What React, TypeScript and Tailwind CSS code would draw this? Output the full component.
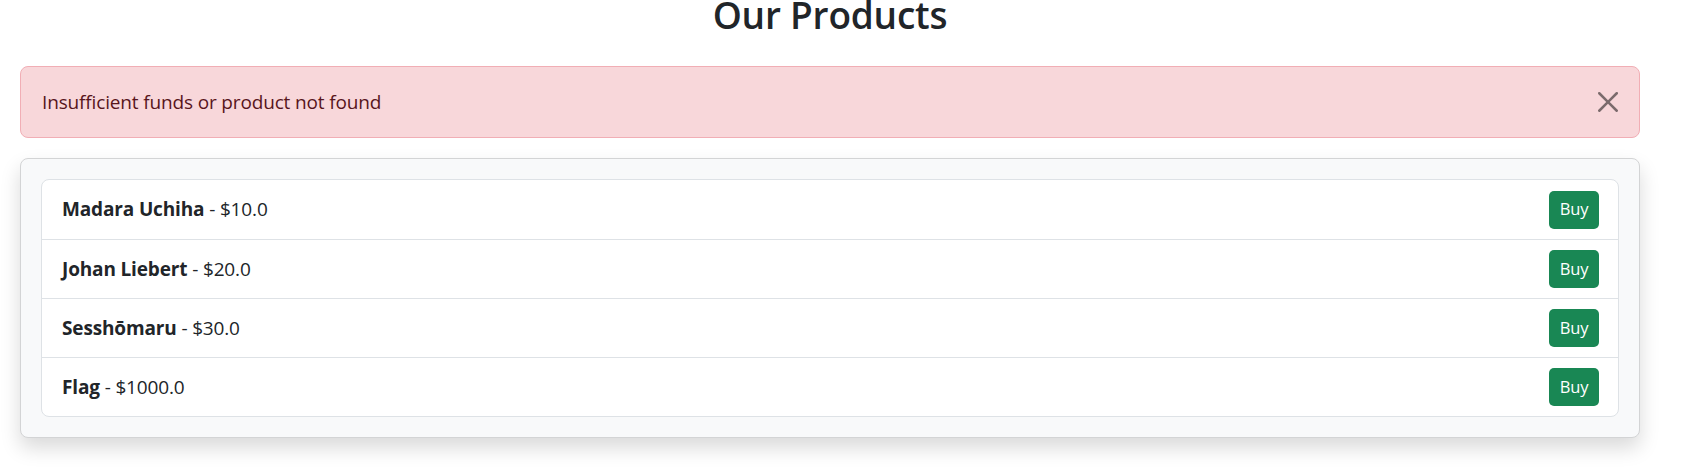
import React from "react";

type Product = {
  name: string
  price: string
}

const PRODUCTS: Product[] = [
  { name: "Madara Uchiha", price: "$10.0" },
  { name: "Johan Liebert", price: "$20.0" },
  { name: "Sesshōmaru", price: "$30.0" },
  { name: "Flag", price: "$1000.0" },
];

const CloseIcon = () => (
  <svg viewBox="0 0 16 16" width="20" height="20" className="opacity-50">
    <path
      fill="#000"
      d="M.293.293a1 1 0 0 1 1.414 0L8 6.586 14.293.293a1 1 0 1 1 1.414 1.414L9.414 8l6.293 6.293a1 1 0 0 1-1.414 1.414L8 9.414l-6.293 6.293a1 1 0 0 1-1.414-1.414L6.586 8 .293 1.707a1 1 0 0 1 0-1.414z"
    />
  </svg>
);

const App = () => {
  return (
    <div className="min-h-[470px] bg-white font-['Open_Sans',sans-serif] text-[#212529] overflow-hidden">
      <div className="w-[1660px] px-[20px]">
        <h2 className="mt-[-9px] mb-[27px] text-center text-[37px] leading-[48px] tracking-[-0.2px] font-semibold">
          Our Products
        </h2>

        <div className="mb-[20px] flex items-center justify-between h-[72px] pl-[21px] pr-[11px] rounded-[8px] border border-[#f1aeb5] bg-[#f8d7da] text-[#58151c] text-[19px] tracking-[-0.15px]">
          <span>Insufficient funds or product not found</span>
          <button className="w-[40px] h-[40px] flex items-center justify-center">
            <CloseIcon />
          </button>
        </div>

        <div className="p-[20px] rounded-[8px] border border-[#d3d4d5] bg-[#f8f9fa] shadow-[0_10px_20px_rgba(0,0,0,0.15)]">
          <ul className="rounded-[8px] border border-[#dee2e6] bg-white">
            {PRODUCTS.map((p, i) => (
              <li
                key={p.name}
                className={
                  "flex items-center justify-between h-[59px] pl-[20px] pr-[19px] text-[19px] tracking-[-0.15px] " +
                  (i > 0 ? "border-t border-[#dee2e6]" : "")
                }
              >
                <span>
                  <strong className="font-bold">{p.name}</strong> - {p.price}
                </span>
                <button className="h-[38px] w-[50px] rounded-[5px] bg-[#198754] text-white text-[16.5px]">
                  Buy
                </button>
              </li>
            ))}
          </ul>
        </div>
      </div>
    </div>
  );
};

export default App;
